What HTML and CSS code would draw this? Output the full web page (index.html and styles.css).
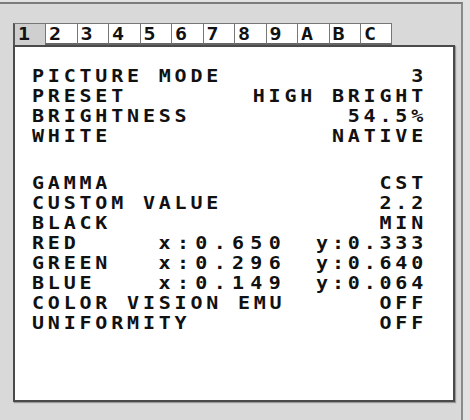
FILE: index.html
```html
<!DOCTYPE html>
<html>
<head>
    <title>OSD</title>
    <meta charset="utf-8">
    <link rel="stylesheet" href="styles.css">
</head>
<body>
    <div class="screen">
        <div class="osd">
            <div class="tabs">
                <div class="tab active"><span>1</span></div>
                <div class="tab"><span>2</span></div>
                <div class="tab"><span>3</span></div>
                <div class="tab"><span>4</span></div>
                <div class="tab"><span>5</span></div>
                <div class="tab"><span>6</span></div>
                <div class="tab"><span>7</span></div>
                <div class="tab"><span>8</span></div>
                <div class="tab"><span>9</span></div>
                <div class="tab"><span>A</span></div>
                <div class="tab"><span>B</span></div>
                <div class="tab"><span>C</span></div>
            </div>
            <div class="panel">
                <div class="group">
                    <div class="row"><span class="label">PICTURE MODE</span><span class="value">3</span></div>
                    <div class="row"><span class="label">PRESET</span><span class="value">HIGH BRIGHT</span></div>
                    <div class="row"><span class="label">BRIGHTNESS</span><span class="value">54.5%</span></div>
                    <div class="row"><span class="label">WHITE</span><span class="value">NATIVE</span></div>
                </div>
                <div class="group second">
                    <div class="row"><span class="label">GAMMA</span><span class="value">CST</span></div>
                    <div class="row"><span class="label">CUSTOM VALUE</span><span class="value">2.2</span></div>
                    <div class="row"><span class="label">BLACK</span><span class="value">MIN</span></div>
                    <div class="row"><span class="label">RED</span><span class="xval">x:0.650</span><span class="yval">y:0.333</span></div>
                    <div class="row"><span class="label">GREEN</span><span class="xval">x:0.296</span><span class="yval">y:0.640</span></div>
                    <div class="row"><span class="label">BLUE</span><span class="xval">x:0.149</span><span class="yval">y:0.064</span></div>
                    <div class="row"><span class="label">COLOR VISION EMU</span><span class="value">OFF</span></div>
                    <div class="row"><span class="label">UNIFORMITY</span><span class="value">OFF</span></div>
                </div>
            </div>
        </div>
    </div>
</body>
</html>
```

FILE: styles.css
```css
html {
    background-color: #e2e2e2;
}
body {
    margin: 0;
    font-family: "DejaVu Sans Mono", monospace;
    font-weight: bold;
    color: #111111;
}
.screen {
    width: 461px;
    height: 416px;
    margin-top: 2px;
    border-top: 2px solid #7c7c7c;
    border-right: 2px solid #8a8a8a;
    background-color: #d9d9d9;
}
.osd {
    padding: 19px 0 0 13px;
}
.tabs {
    display: flex;
    height: 22px;
}
.tab {
    width: 31.5px;
    box-sizing: border-box;
    border: 1px solid #777777;
    border-right: 0;
    border-bottom: 2px solid #666666;
    background-color: #ffffff;
    font-size: 20px;
    line-height: 21px;
    padding-left: 3px;
}
.tab span {
    display: inline-block;
    transform: scaleY(0.9);
}
.tab:last-child {
    border-right: 1px solid #777777;
}
.tab.active {
    width: 32px;
    background-color: #cfcfcf;
    border-left: 2px solid #555555;
    border-bottom: 0;
}
.panel {
    width: 442px;
    height: 357px;
    box-sizing: border-box;
    border: 2px solid #4a4a4a;
    background-color: #ffffff;
    padding: 19px 26px 0 17px;
    box-shadow: 1px 1px 1px #999999;
}
.group.second {
    margin-top: 27px;
}
.row {
    display: grid;
    grid-template-columns: minmax(0, 1fr) 134px 140px;
    font-size: 20px;
    line-height: 20px;
    letter-spacing: 3.8px;
    white-space: pre;
}
.row span {
    transform: scaleY(0.86);
}
.label {
    min-width: 0;
}
.value {
    grid-column: 2 / 4;
    text-align: right;
}
.xval {
    text-align: right;
    letter-spacing: 6.3px;
}
.yval {
    text-align: right;
}
```
